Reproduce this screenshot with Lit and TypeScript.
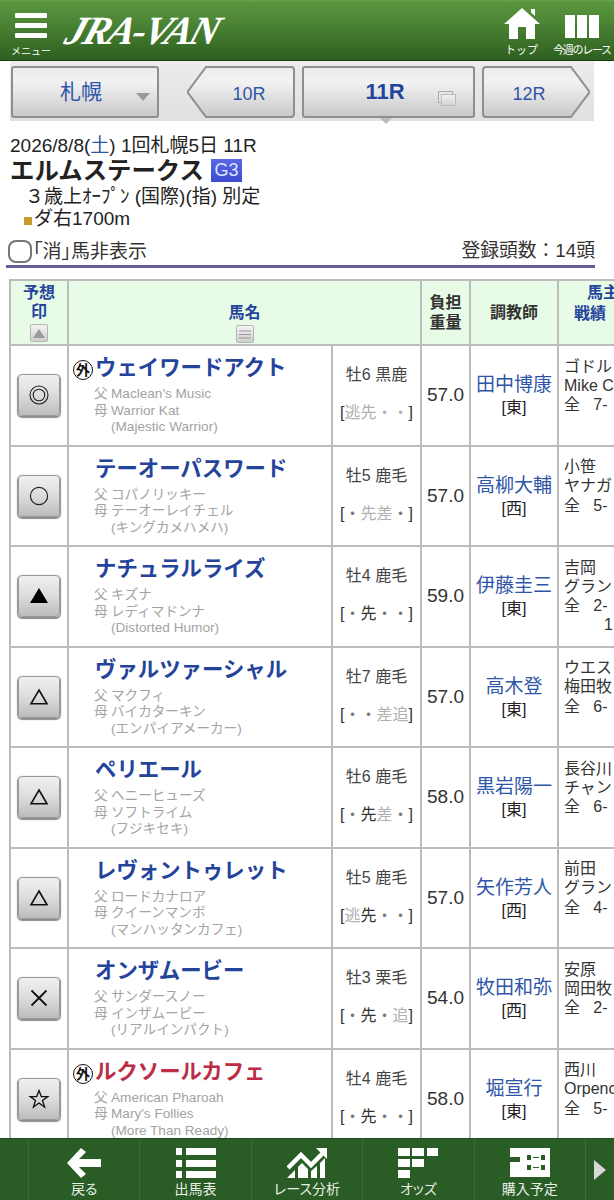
import { LitElement, html, css, svg } from 'lit';
import { customElement } from 'lit/decorators.js';

type Horse = {
  name: string;
  foreign?: boolean;
  red?: boolean;
  mark: string;
  sire: string;
  dam: string;
  damsire: string;
  sex: string;
  style: [string, boolean][];
  weight: string;
  trainer: string;
  stable: string;
  owner: string[];
};

const dim = (c: string): [string, boolean] => [c, false];
const on = (c: string): [string, boolean] => [c, true];

const HORSES: Horse[] = [
  { name: 'ウェイワードアクト', foreign: true, mark: 'double', sire: "Maclean's Music", dam: 'Warrior Kat', damsire: '(Majestic Warrior)', sex: '牡6 黒鹿', style: [dim('逃'), dim('先'), dim('・'), dim('・')], weight: '57.0', trainer: '田中博康', stable: '[東]', owner: ['ゴドル', 'Mike C', '全   7-'] },
  { name: 'テーオーパスワード', mark: 'circle', sire: 'コパノリッキー', dam: 'テーオーレイチェル', damsire: '(キングカメハメハ)', sex: '牡5 鹿毛', style: [on('・'), dim('先'), dim('差'), on('・')], weight: '57.0', trainer: '高柳大輔', stable: '[西]', owner: ['小笹', 'ヤナガ', '全   5-'] },
  { name: 'ナチュラルライズ', mark: 'solid', sire: 'キズナ', dam: 'レディマドンナ', damsire: '(Distorted Humor)', sex: '牡4 鹿毛', style: [on('・'), on('先'), on('・'), on('・')], weight: '59.0', trainer: '伊藤圭三', stable: '[東]', owner: ['吉岡', 'グラン', '全   2-', '         1'] },
  { name: 'ヴァルツァーシャル', mark: 'tri', sire: 'マクフィ', dam: 'バイカターキン', damsire: '(エンパイアメーカー)', sex: '牡7 鹿毛', style: [on('・'), on('・'), dim('差'), dim('追')], weight: '57.0', trainer: '高木登', stable: '[東]', owner: ['ウエス', '梅田牧', '全   6-'] },
  { name: 'ペリエール', mark: 'tri', sire: 'ヘニーヒューズ', dam: 'ソフトライム', damsire: '(フジキセキ)', sex: '牡6 鹿毛', style: [on('・'), on('先'), dim('差'), on('・')], weight: '58.0', trainer: '黒岩陽一', stable: '[東]', owner: ['長谷川', 'チャン', '全   6-'] },
  { name: 'レヴォントゥレット', mark: 'tri', sire: 'ロードカナロア', dam: 'クイーンマンボ', damsire: '(マンハッタンカフェ)', sex: '牡5 鹿毛', style: [dim('逃'), on('先'), on('・'), on('・')], weight: '57.0', trainer: '矢作芳人', stable: '[西]', owner: ['前田', 'グラン', '全   4-'] },
  { name: 'オンザムービー', mark: 'cross', sire: 'サンダースノー', dam: 'インザムービー', damsire: '(リアルインパクト)', sex: '牡3 栗毛', style: [on('・'), on('先'), on('・'), dim('追')], weight: '54.0', trainer: '牧田和弥', stable: '[西]', owner: ['安原', '岡田牧', '全   2-'] },
  { name: 'ルクソールカフェ', foreign: true, red: true, mark: 'star', sire: 'American Pharoah', dam: "Mary's Follies", damsire: '(More Than Ready)', sex: '牡4 鹿毛', style: [on('・'), on('先'), on('・'), on('・')], weight: '58.0', trainer: '堀宣行', stable: '[東]', owner: ['西川', 'Orpenc', '全   5-'] },
];

const markIcon = (kind: string) => {
  switch (kind) {
    case 'double':
      return svg`<circle cx="12" cy="12" r="9" fill="none" stroke="#222" stroke-width="1.1"/><circle cx="12" cy="12" r="5.8" fill="none" stroke="#222" stroke-width="1.1"/>`;
    case 'circle':
      return svg`<circle cx="12" cy="12" r="8.6" fill="none" stroke="#222" stroke-width="1.2"/>`;
    case 'solid':
      return svg`<path d="M12 4L21 19H3Z" fill="#000"/>`;
    case 'tri':
      return svg`<path d="M12 5L20 18.800H4Z" fill="none" stroke="#111" stroke-width="1.6"/>`;
    case 'cross':
      return svg`<path d="M4.500 4.500L19.500 19.500M19.500 4.500L4.500 19.500" fill="none" stroke="#111" stroke-width="1.8"/>`;
    default:
      return svg`<path d="M12 3.500L14.300 9.600H20.800L15.500 13.500L17.600 20L12 16L6.400 20L8.500 13.500L3.200 9.600H9.700Z" fill="none" stroke="#111" stroke-width="1.3"/>`;
  }
};

@customElement('app-root')
export class AppRoot extends LitElement {
  static styles = css`
    :host {
      display: flex;
      flex-direction: column;
      width: 614px;
      height: 1200px;
      overflow: hidden;
      background: #fff;
      color: #222;
      font-family: 'Liberation Sans', 'Noto Sans CJK JP', sans-serif;
    }
    .top {
      flex: none;
      height: 61px;
      box-sizing: border-box;
      display: flex;
      align-items: flex-start;
      background: linear-gradient(#6aa64c 0, #5a963f 2px, #4c8535 22px, #2f6120 58px);
      border-bottom: 1px solid #1c3a12;
      color: #fff;
      position: relative;
    }
    .menu {
      width: 62px;
      flex: none;
      display: flex;
      flex-direction: column;
      align-items: center;
      padding-top: 13px;
      box-sizing: border-box;
    }
    .menu i {
      display: block;
      width: 32px;
      height: 5px;
      margin-bottom: 5px;
      background: #fff;
      border-radius: 1px;
    }
    .menu span {
      font-size: 10px;
      line-height: 13px;
      margin-top: 2px;
      white-space: nowrap;
    }
    .logo {
      flex: none;
      margin: 12px 0 0 5px;
      font: italic bold 40px/38px 'Liberation Serif', serif;
      letter-spacing: -2.2px;
      color: #fff;
      transform: skewX(-18deg);
      white-space: nowrap;
    }
    .top-links {
      margin-left: auto;
      display: flex;
    }
    .top-link {
      display: flex;
      flex-direction: column;
      align-items: center;
      font-size: 11px;
      line-height: 13px;
      white-space: nowrap;
    }
    .top-link svg {
      display: block;
      margin-top: 7px;
      margin-bottom: 5px;
    }
    .top-link.home {
      width: 59px;
    }
    .top-link.week {
      width: 62px;
      margin-right: 1px;
      letter-spacing: -1.3px;
    }
    .race-nav {
      flex: none;
      height: 60px;
      width: 584px;
      margin-left: 10px;
      display: flex;
      box-sizing: border-box;
      padding: 5px 4px 0 1px;
      background: linear-gradient(#ececec, #e0e0e0);
      position: relative;
    }
    .btn {
      height: 52px;
      box-sizing: border-box;
      position: relative;
      display: flex;
      align-items: center;
      justify-content: center;
      color: #2f55a8;
    }
    .venue {
      width: 148px;
      border: 2px solid #8f8f8f;
      border-radius: 3px;
      background: linear-gradient(#ececec, #f2f2f2 30%, #c9c9c9);
      font-size: 21px;
      padding: 0 8px 4px 0;
    }
    .venue::after {
      content: '';
      position: absolute;
      right: 7px;
      top: 25px;
      border: 7.5px solid transparent;
      border-top: 8px solid #999;
      border-bottom: 0;
    }
    .shape {
      width: 108px;
      font-size: 18px;
    }
    .shape svg {
      position: absolute;
      inset: 0;
    }
    .shape span {
      position: relative;
      margin-top: 5px;
    }
    .prev {
      margin-left: 28px;
    }
    .prev span {
      margin-left: 16px;
    }
    .next span {
      margin-right: 14px;
    }
    .current {
      width: 173px;
      margin: 0 7px;
      border: 2px solid #8f8f8f;
      border-radius: 3px;
      background: linear-gradient(#ececec, #f2f2f2 30%, #c9c9c9);
      font-size: 22px;
      font-weight: bold;
      color: #24449c;
      padding-right: 7px;
    }
    .copy {
      position: absolute;
      right: 17px;
      top: 26px;
      width: 13px;
      height: 10px;
      border: 1px solid #bbb;
      background: linear-gradient(#f0f0f0, #d4d4d4);
      box-shadow: -3px -3px 0 -1px #e6e6e6, -3px -3px 0 0 #aaa;
    }
    .current::after {
      content: '';
      position: absolute;
      left: 76px;
      bottom: -8px;
      border: 6px solid transparent;
      border-top: 6px solid #bbb;
      border-bottom: 0;
    }
    .info {
      flex: none;
      padding: 14px 0 0 10px;
    }
    .date {
      font-size: 19px;
      line-height: 21px;
      white-space: nowrap;
    }
    .date b {
      font-weight: normal;
      color: #2f55a8;
    }
    .title {
      display: flex;
      align-items: center;
      gap: 7px;
      font-size: 24.4px;
      font-weight: bold;
      line-height: 29px;
    }
    .grade {
      background: linear-gradient(#5a68e4, #3c4cd0);
      color: #dfe3ff;
      font-size: 18px;
      font-weight: normal;
      line-height: 23px;
      width: 31px;
      text-align: center;
    }
    .cond {
      font-size: 19px;
      line-height: 23px;
      padding-left: 15px;
      white-space: nowrap;
    }
    .course {
      font-size: 19px;
      line-height: 22px;
      padding-left: 14px;
      display: flex;
      align-items: center;
    }
    .course i {
      width: 8px;
      height: 8px;
      background: #c89a2c;
      margin-right: 2px;
      margin-top: 4px;
    }
    .filter {
      flex: none;
      width: 589px;
      margin: 4px 0 0 6px;
      height: 34px;
      box-sizing: border-box;
      display: flex;
      align-items: center;
      border-bottom: 3px solid #65609c;
      font-size: 19px;
      color: #333;
      font-feature-settings: 'palt';
    }
    .check {
      width: 24px;
      height: 23px;
      box-sizing: border-box;
      border: 2px solid #777;
      border-radius: 8px;
      background: #fff;
      margin: 3px 1px 0 2px;
    }
    .filter .count {
      margin-left: auto;
      font-feature-settings: normal;
      font-size: 18.8px;
      margin-top: -2px;
    }
    .table {
      flex: 1;
      min-height: 0;
      overflow: hidden;
      margin: 11px 0 0 9px;
      border-top: 2px solid #bcbcbc;
    }
    .row {
      display: grid;
      grid-template-columns: 58px 264px 89px 49px 88px 90px;
      width: 638px;
      height: 100.5px;
      box-sizing: border-box;
      border-bottom: 2px solid #bcbcbc;
    }
    .cell {
      box-sizing: border-box;
      border-left: 2px solid #bcbcbc;
      min-width: 0;
      overflow: hidden;
    }
    .head {
      height: 65px;
      background: #e8fbe6;
    }
    .head .cell {
      display: flex;
      flex-direction: column;
      align-items: center;
      justify-content: center;
      font-size: 16px;
      font-weight: bold;
      line-height: 20px;
      color: #333;
    }
    .head .mark-head {
      justify-content: flex-start;
      padding-top: 2px;
      color: #24449c;
      text-align: center;
      line-height: 19px;
    }
    .head .nm {
      grid-column: span 2;
      justify-content: flex-start;
      padding-top: 22px;
      color: #24449c;
    }
    .sort {
      width: 18px;
      height: 18px;
      box-sizing: border-box;
      border: 1px solid #b5b5b5;
      border-radius: 2px;
      background: linear-gradient(#f4f4f4, #cfcfcf);
      margin-top: 3px;
      display: flex;
      align-items: center;
      justify-content: center;
    }
    .head .nm .sort {
      margin-top: 2px;
    }
    .head .owner {
      align-items: flex-start;
      justify-content: flex-start;
      white-space: nowrap;
      color: #24449c;
      padding: 1px 0 0 15px;
      line-height: 21px;
    }
    .owner span {
      padding-left: 13px;
    }
    .mark {
      display: flex;
      align-items: center;
      justify-content: center;
    }
    .mark-btn {
      width: 42px;
      height: 42px;
      box-sizing: border-box;
      border: 1px solid #9a9a9a;
      border-radius: 4px;
      background: linear-gradient(#f0f0f0, #dcdcdc 50%, #bcbcbc);
      box-shadow: 0 1px 1px 1px #8c8c8c;
      display: flex;
      align-items: center;
      justify-content: center;
    }
    .horse {
      padding: 7px 0 0 26px;
      position: relative;
    }
    .horse-name {
      font-size: 21.4px;
      line-height: 30px;
      font-weight: bold;
      color: #24449c;
      white-space: nowrap;
    }
    .horse-name.red {
      color: #bd2c47;
    }
    .gaikoku {
      position: absolute;
      left: 4px;
      top: 14px;
      width: 20px;
      height: 20px;
      box-sizing: border-box;
      border: 1px solid #111;
      border-radius: 50%;
      font-size: 14px;
      font-weight: bold;
      line-height: 18px;
      text-align: center;
      color: #111;
      background: #fff;
    }
    .pedigree {
      display: grid;
      grid-template-columns: 17px auto;
      font-size: 13.6px;
      line-height: 16.6px;
      color: #a3a3a3;
      white-space: nowrap;
      margin: 3px 0 0 -1px;
    }
    .pedigree span:nth-child(5) {
      grid-column: 2;
    }
    .sex {
      text-align: center;
      font-size: 16px;
      padding-top: 19px;
      line-height: 20px;
      color: #444;
      white-space: nowrap;
    }
    .style {
      margin-top: 18px;
      color: #333;
    }
    .style .off {
      color: #b0b0b0;
    }
    .style .dot {
      color: #777;
    }
    .weight {
      display: flex;
      align-items: center;
      justify-content: center;
      font-size: 19px;
      color: #333;
    }
    .trainer {
      display: flex;
      flex-direction: column;
      align-items: center;
      justify-content: center;
      white-space: nowrap;
    }
    .trainer a {
      font-size: 19px;
      line-height: 25px;
      color: #2f55a8;
    }
    .trainer span {
      font-size: 16px;
      line-height: 21px;
    }
    .owner-cell {
      padding: 10.500px 0 0 5px;
      font-size: 16px;
      line-height: 19.300px;
      white-space: pre;
      color: #333;
    }
    .foot {
      flex: none;
      height: 62px;
      box-sizing: border-box;
      background: #2a5c25;
      border-top: 1px solid #1f4a1b;
      display: grid;
      grid-template-columns: 28px repeat(5, 111.4px) 1fr;
      color: #e8efe6;
      font-feature-settings: 'palt';
    }
    .foot > div {
      border-left: 1px solid #3a6c35;
      display: flex;
      flex-direction: column;
      align-items: center;
      font-size: 14px;
      line-height: 16px;
      white-space: nowrap;
      overflow: hidden;
    }
    .foot > div:first-child {
      border-left: 0;
    }
    .foot svg {
      display: block;
      margin-top: 9px;
      margin-bottom: 3px;
    }
    .foot .more {
      justify-content: center;
    }
    .foot .more svg {
      margin: 0;
    }
  `;

  private navShape(dir: 'prev' | 'next', id: string) {
    const d =
      dir === 'prev'
        ? 'M19 1H104Q107 1 107 4V48Q107 51 104 51H19L1 27Q0 26 1 25Z'
        : 'M4 1H89L107 25Q108 26 107 27L89 51H4Q1 51 1 48V4Q1 1 4 1Z';
    return html`<svg width="108" height="52" viewBox="0 0 108 52">
      <defs>
        <linearGradient id=${id} x1="0" y1="0" x2="0" y2="1">
          <stop offset="0" stop-color="#ececec" />
          <stop offset="0.3" stop-color="#f2f2f2" />
          <stop offset="1" stop-color="#c9c9c9" />
        </linearGradient>
      </defs>
      <path d=${d} fill="url(#${id})" stroke="#8f8f8f" stroke-width="2" />
    </svg>`;
  }

  private styleChar(c: string, active: boolean) {
    const cls = !active ? 'off' : c === '・' ? 'dot' : '';
    return html`<span class=${cls}>${c}</span>`;
  }

  private renderHorse(h: Horse) {
    return html`<div class="row">
      <div class="cell mark">
        <div class="mark-btn"><svg width="24" height="24" viewBox="0 0 24 24">${markIcon(h.mark)}</svg></div>
      </div>
      <div class="cell horse">
        ${h.foreign ? html`<span class="gaikoku">外</span>` : ''}
        <div class="horse-name ${h.red ? 'red' : ''}">${h.name}</div>
        <div class="pedigree">
          <span>父</span><span>${h.sire}</span>
          <span>母</span><span>${h.dam}</span>
          <span>${h.damsire}</span>
        </div>
      </div>
      <div class="cell sex">
        <div>${h.sex}</div>
        <div class="style">[${h.style.map(([c, active]) => this.styleChar(c, active))}]</div>
      </div>
      <div class="cell weight">${h.weight}</div>
      <div class="cell trainer"><a>${h.trainer}</a><span>${h.stable}</span></div>
      <div class="cell owner-cell">${h.owner.join('\n')}</div>
    </div>`;
  }

  render() {
    return html`
      <div class="top">
        <div class="menu"><i></i><i></i><i></i><span>メニュー</span></div>
        <div class="logo">JRA-VAN</div>
        <div class="top-links">
          <div class="top-link home">
            <svg width="36" height="32" viewBox="0 0 36 32">
              <path d="M18 1L36 17H31V32H22V20H14V32H5V17H0Z M27 2H31V9L27 5.500Z" fill="#fff" />
            </svg>
            トップ
          </div>
          <div class="top-link week">
            <svg width="34" height="32" viewBox="0 0 34 32">
              <path d="M0 8H10V31H0Z M12 8H22V31H12Z M24 8H34V31H24Z" fill="#fff" />
            </svg>
            今週のレース
          </div>
        </div>
      </div>

      <div class="race-nav">
        <div class="btn venue">札幌</div>
        <div class="btn shape prev">${this.navShape('prev', 'gp')}<span>10R</span></div>
        <div class="btn current">11R<i class="copy"></i></div>
        <div class="btn shape next">${this.navShape('next', 'gn')}<span>12R</span></div>
      </div>

      <div class="info">
        <div class="date">2026/8/8(<b>土</b>) 1回札幌5日 11R</div>
        <div class="title">エルムステークス<span class="grade">G3</span></div>
        <div class="cond">３歳上ｵｰﾌﾟﾝ (国際)(指) 別定</div>
        <div class="course"><i></i>ダ右1700m</div>
      </div>

      <div class="filter">
        <span class="check"></span>
        <span>「消」馬非表示</span>
        <span class="count">登録頭数：14頭</span>
      </div>

      <div class="table">
        <div class="row head">
          <div class="cell mark-head">
            予想<br />印
            <span class="sort"><svg width="12" height="9" viewBox="0 0 12 9"><path d="M6 0L12 9H0Z" fill="#9a9a9a" /></svg></span>
          </div>
          <div class="cell nm">
            馬名
            <span class="sort"><svg width="12" height="9" viewBox="0 0 12 9"><path d="M0 1H12M0 4.500H12M0 8H12" stroke="#999" /></svg></span>
          </div>
          <div class="cell">負担<br />重量</div>
          <div class="cell">調教師</div>
          <div class="cell owner"><span>馬主</span>戦績</div>
        </div>
        ${HORSES.map((h) => this.renderHorse(h))}
      </div>

      <div class="foot">
        <div></div>
        <div>
          <svg width="34" height="30" viewBox="0 0 34 30"><path d="M0 15L14 0L19 4L12 11H34V19H12L19 26L14 30Z" fill="#fff" /></svg>
          戻る
        </div>
        <div>
          <svg width="40" height="30" viewBox="0 0 40 30"><path d="M0 0H6V7H0Z M0 12H6V19H0Z M0 23H6V30H0Z M10 0H40V7H10Z M10 12H40V19H10Z M10 23H40V30H10Z" fill="#fff" /></svg>
          出馬表
        </div>
        <div>
          <svg width="40" height="30" viewBox="0 0 40 30">
            <path d="M1 20L14 7L24 17L36 5" fill="none" stroke="#fff" stroke-width="4.500" />
            <path d="M29 0H40V11Z M0 30L8 22V30Z M11 19L15 15L21 21V30H11Z M24 23L30 18V30H24Z M33 15L38 10V30H33Z" fill="#fff" />
          </svg>
          レース分析
        </div>
        <div>
          <svg width="40" height="30" viewBox="0 0 40 30"><path d="M0 0H12V8H0Z M14 0H26V8H14Z M29 0H40V8H29Z M0 11H12V19H0Z M14 11H26V19H14Z M0 22H12V30H0Z" fill="#fff" /></svg>
          オッズ
        </div>
        <div>
          <svg width="40" height="30" viewBox="0 0 40 30"><path fill-rule="evenodd" d="M0 0H40V29H0V14H10V9H0Z M17 7V12H21V7Z M31 7V12H35V7Z M17 17V22H21V17Z M31 17V22H35V17Z M23 9V10H29V9Z M23 19V20H29V19Z" fill="#fff" /></svg>
          購入予定
        </div>
        <div class="more">
          <svg width="12" height="20" viewBox="0 0 12 20"><path d="M0 0L12 10L0 20Z" fill="#d8d8d8" /></svg>
        </div>
      </div>
    `;
  }
}
